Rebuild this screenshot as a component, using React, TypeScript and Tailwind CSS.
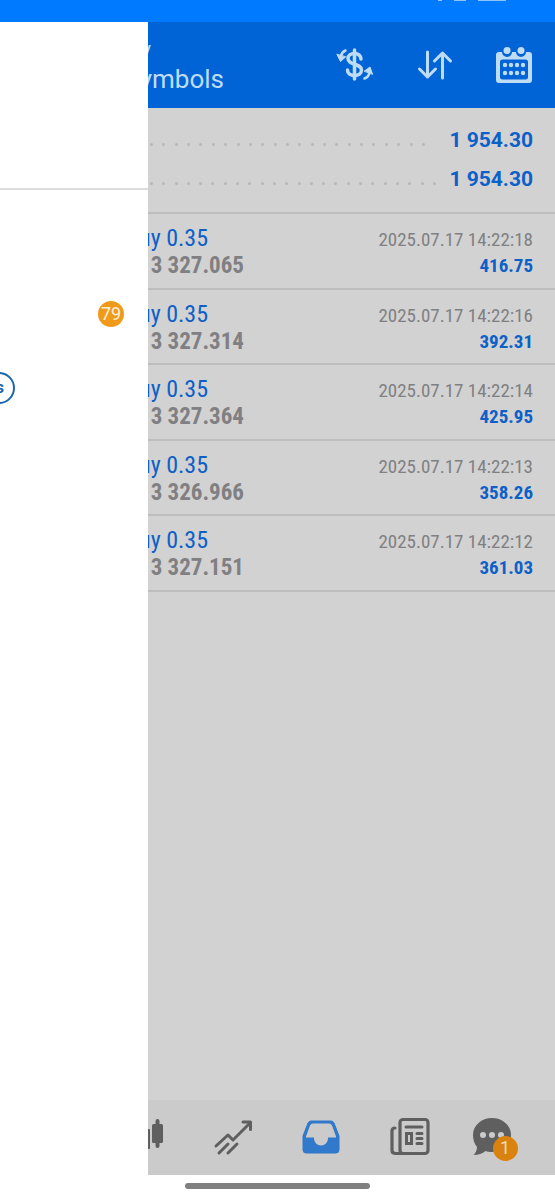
const totals = [
  { value: "1 954.30", dots: 23, end: "w-[425px]" },
  { value: "1 954.30", dots: 24, end: "w-[436px]" },
];

const deals = [
  { volume: "buy 0.35", price: "3 327.065", time: "2025.07.17 14:22:18", profit: "416.75" },
  { volume: "buy 0.35", price: "3 327.314", time: "2025.07.17 14:22:16", profit: "392.31" },
  { volume: "buy 0.35", price: "3 327.364", time: "2025.07.17 14:22:14", profit: "425.95" },
  { volume: "buy 0.35", price: "3 326.966", time: "2025.07.17 14:22:13", profit: "358.26" },
  { volume: "buy 0.35", price: "3 327.151", time: "2025.07.17 14:22:12", profit: "361.03" },
];

function CurrencyIcon() {
  return (
    <svg width="40" height="36" viewBox="0 0 40 36" fill="none" stroke="currentColor" strokeWidth="3.5" strokeLinecap="round">
      <path d="M19.500 3v29" />
      <path d="M26 12c-.5-3.500-3-5.500-6.500-5.500-4 0-6.500 2-6.500 5 0 7 13.500 4.500 13.500 11.500 0 3.500-3 5.500-7 5.500s-7-2-7-5.500" />
      <path d="M10.500 3.500C8 4.500 6.500 6.500 6 9" strokeWidth="2.500" />
      <path d="M2 7.500l3.500 7L10.500 10z" fill="currentColor" stroke="currentColor" strokeWidth="1" strokeLinejoin="round" />
      <path d="M29.500 31.500c3-1 4.500-3.500 5-6" strokeWidth="2.500" />
      <path d="M29.500 24l5.500-4 2.500 7z" fill="currentColor" stroke="currentColor" strokeWidth="1" strokeLinejoin="round" />
    </svg>
  );
}

function SortIcon() {
  return (
    <svg width="36" height="32" viewBox="0 0 36 32" fill="none" stroke="currentColor" strokeWidth="3" strokeLinecap="round" strokeLinejoin="round">
      <path d="M10.500 3v25M2.500 20l8 8 8-8" />
      <path d="M25.500 29V4M17.500 12l8-8 8 8" />
    </svg>
  );
}

function CalendarIcon() {
  return (
    <svg width="38" height="38" viewBox="0 0 38 38" fill="currentColor">
      <path fillRule="evenodd" d="M4 6h3a5 5 0 0 0 10 0h4a5 5 0 0 0 10 0h3q3 0 3 3v25q0 3-3 3H4q-3 0-3-3V9q0-3 3-3zM7.500 13.500q-2.500 0-2.500 2.500V31q0 2.500 2.500 2.500h23q2.500 0 2.500-2.500V16q0-2.500-2.500-2.500z" />
      <circle cx="12" cy="4.500" r="3.500" />
      <circle cx="26" cy="4.500" r="3.500" />
      {[19, 27].map((y) =>
        [10, 16, 22, 28].map((x) => <circle key={`${x}-${y}`} cx={x} cy={y} r="2.200" />)
      )}
    </svg>
  );
}

function CandlesIcon() {
  return (
    <svg width="40" height="40" viewBox="0 0 40 40" fill="currentColor">
      <rect x="14" y="12" width="12" height="20" rx="1" />
      <rect x="18" y="7" width="4" height="29" rx="2" />
      <rect x="28" y="7" width="11" height="19" rx="1.500" />
      <rect x="31.500" y="2" width="4" height="29" rx="2" />
    </svg>
  );
}

function TrendIcon() {
  return (
    <svg width="40" height="38" viewBox="0 0 40 38" fill="none" stroke="currentColor" strokeWidth="3" strokeLinecap="round" strokeLinejoin="round">
      <path d="M3 28l12-11 5 5L37 5" />
      <path d="M30 4h7.500v7.500" />
      <path d="M6 35l9-9M15 35l9-9" />
    </svg>
  );
}

function InboxIcon() {
  return (
    <svg width="40" height="38" viewBox="0 0 40 38">
      <path d="M10 3h20q2 0 3 2l5 13v14q0 3-3 3H5q-3 0-3-3V18L7 5q1-2 3-2z" fill="#3179ca" stroke="#3179ca" />
      <path d="M12 5.500h16q2 0 3 2l4 11v1h-8v1a7 7 0 0 1-14 0v-1H5v-1l4-11q1-2 3-2z" fill="#cbcbcb" />
    </svg>
  );
}

function NewsIcon() {
  return (
    <svg width="40" height="40" viewBox="0 0 40 40" fill="none" stroke="currentColor" strokeWidth="3.200">
      <rect x="10" y="2.500" width="28" height="34" rx="3" />
      <path d="M5 11q-3 0-3 3v19.500q0 3 4 3h5" strokeLinecap="round" />
      <path d="M16 10h16M27 16.500h5M27 21.500h5M27 26.500h5" strokeLinecap="round" strokeWidth="3" />
      <rect x="16.500" y="16.500" width="5" height="10" strokeWidth="3" />
    </svg>
  );
}

function ChatIcon() {
  return (
    <svg width="40" height="40" viewBox="0 0 40 40">
      <path d="M20 1c10.500 0 19 7.500 19 17s-8.500 17-19 17c-2.500 0-4.500-.3-6.500-1-3 2.500-7 4-12 4 2-2 3.500-4.500 3.500-8C2.500 27 1 23 1 18 1 8.500 9.500 1 20 1z" fill="currentColor" />
      <circle cx="11" cy="18" r="3" fill="#cbcbcb" />
      <circle cx="20" cy="18" r="3" fill="#cbcbcb" />
      <circle cx="29" cy="18" r="3" fill="#cbcbcb" />
    </svg>
  );
}

function Drawer() {
  return (
    <aside className="absolute inset-y-0 left-0 z-10 w-[148px] overflow-hidden bg-white">
      <div className="h-[168px] border-b-2 border-[#dcdcdc]" />
      <div className="flex justify-end pt-[111px] pr-6">
        <span className="flex size-[26px] items-center justify-center rounded-full bg-[#f09a1c] font-['Roboto'] text-lg leading-none text-[#fdf0dc]">
          79
        </span>
      </div>
      <div className="mt-[45px] flex w-[15px] justify-end">
        <button className="flex h-8 w-20 shrink-0 items-center justify-end rounded-full border-2 border-[#1c66ac] pr-[9px] font-['Roboto'] text-base font-bold text-[#1c66ac]">
          s
        </button>
      </div>
    </aside>
  );
}

export default function App() {
  return (
    <div className="flex min-h-screen flex-col bg-white font-['Roboto_Condensed','Liberation_Sans_Narrow',Roboto,sans-serif]">
      <div className="flex h-[22px] items-start justify-end gap-3 bg-[#007bff] pr-[49px]">
        <span className="h-px w-1 bg-[#8cc5f7]" />
        <span className="h-px w-3 bg-[#8cc5f7]" />
        <span className="h-px w-7 bg-[#8cc5f7]" />
      </div>

      <div className="relative flex flex-1 flex-col overflow-hidden bg-[#d2d2d2]">
        <Drawer />

        <header className="flex h-[86px] items-center justify-between bg-[#0064d6] pr-[22px] text-[#bfdcf5]">
          <div className="w-[224px] text-right font-['Roboto']">
            <h1 className="w-[151px] text-xl leading-7">History</h1>
            <p className="text-[26px] leading-8">All symbols</p>
          </div>
          <div className="flex items-center gap-[42px]">
            <button aria-label="Currency"><CurrencyIcon /></button>
            <button aria-label="Sort"><SortIcon /></button>
            <button aria-label="Calendar"><CalendarIcon /></button>
          </div>
        </header>

        <section className="flex h-[106px] flex-col border-b-2 border-[#bdbdbd] pt-3 font-['Roboto']">
          {totals.map((t, i) => (
            <div key={i} className="flex h-[39px] items-center justify-between pr-[22px]">
              <div className={`${t.end} flex justify-between pt-[10px] pl-[150px]`}>
                {Array.from({ length: t.dots }, (_, n) => (
                  <span key={n} className="size-[3px] rounded-full bg-[#b8b8b8]" />
                ))}
              </div>
              <span className="text-[21px] leading-7 font-bold text-[#0c60c8]">{t.value}</span>
            </div>
          ))}
        </section>

        <ul className="grid h-[378px] grid-rows-5">
          {deals.map((d) => (
            <li key={d.time} className="flex justify-between border-b-2 border-[#bdbdbd] pt-[10px] pr-[22px]">
              <div className="w-[244px] text-right">
                <div className="w-[208px] text-2xl leading-7 text-[#0c60c8]">{d.volume}</div>
                <div className="text-[23px] leading-7 font-bold text-[#808083]">{d.price}</div>
              </div>
              <div className="pt-[2px] text-right">
                <div className="text-[19px] leading-7 text-[#808083]">{d.time}</div>
                <div className="text-[19px] leading-6 font-bold text-[#0c60c8]">{d.profit}</div>
              </div>
            </li>
          ))}
        </ul>

        <nav className="mt-auto flex h-[75px] items-center bg-[#cbcbcb] pr-3 pb-[2px] pl-[100px] text-[#5f5f5f]">
          <button aria-label="Charts" className="flex flex-1 justify-center"><CandlesIcon /></button>
          <button aria-label="Trade" className="flex flex-1 justify-center"><TrendIcon /></button>
          <button aria-label="History" className="flex flex-1 justify-center"><InboxIcon /></button>
          <button aria-label="News" className="flex flex-1 justify-center"><NewsIcon /></button>
          <button aria-label="Messages" className="flex flex-1 justify-center">
            <span className="relative pr-[14px]">
              <ChatIcon />
              <span className="absolute right-2 -bottom-1 flex size-[25px] items-center justify-center rounded-full bg-[#d9820f] font-['Roboto'] text-lg leading-none text-[#f0dcc0]">
                1
              </span>
            </span>
          </button>
        </nav>
      </div>

      <div className="flex h-[25px] items-center justify-center pb-1">
        <div className="h-[6px] w-1/3 rounded-full bg-[#808080]" />
      </div>
    </div>
  );
}
